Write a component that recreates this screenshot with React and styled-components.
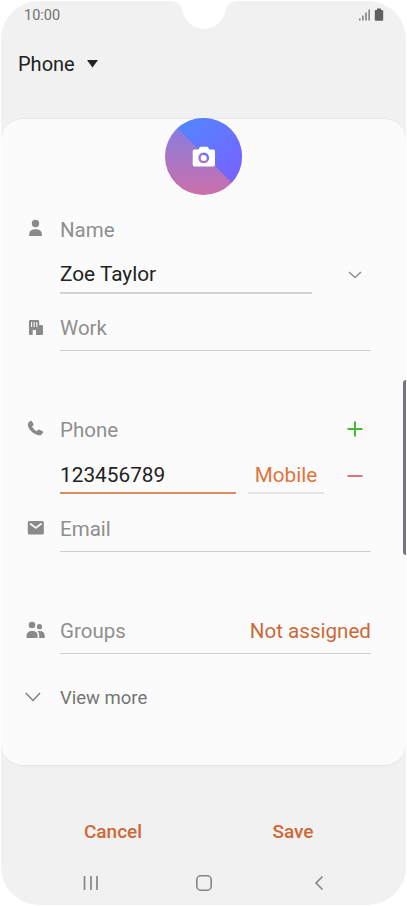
import React, { useState } from 'react';
import styled, { createGlobalStyle } from 'styled-components';

const colors = {
  screen: '#f1f1f1',
  card: '#fbfbfb',
  text: '#222222',
  label: '#8f8f8f',
  icon: '#8a8a8a',
  line: '#cfcfcf',
  accent: '#cc6838'
};

const GlobalStyle = createGlobalStyle`
  * {
    box-sizing: border-box;
  }

  body {
    margin: 0;
    background: #ffffff;
    font-family: Roboto, sans-serif;
    color: ${colors.text};
  }

  button,
  input {
    padding: 0;
    border: 0;
    background: none;
    font: inherit;
    color: inherit;
    outline: none;
  }
`;

const Screen = styled.main`
  position: relative;
  display: flex;
  flex-direction: column;
  width: 405px;
  height: 904px;
  margin: 1px;
  border-radius: 38px;
  background: ${colors.screen};
  overflow: hidden;
`;

const Notch = styled.svg`
  position: absolute;
  top: 0;
  left: 167px;
`;

const EdgeHandle = styled.div`
  position: absolute;
  top: 379px;
  right: 0;
  width: 3px;
  height: 175px;
  border-radius: 3px 0 0 3px;
  background: #777580;
`;

const StatusBar = styled.header`
  display: flex;
  align-items: center;
  justify-content: space-between;
  height: 28px;
  padding: 0 22px 0 23px;
  font-size: 14.5px;
  color: #707070;
`;

const AccountPicker = styled.button`
  display: flex;
  align-items: center;
  gap: 12px;
  height: 70px;
  margin-bottom: 19px;
  padding-left: 17px;
  font-size: 20px;
`;

const Card = styled.section`
  display: flex;
  flex-direction: column;
  height: 648px;
  border-top: 1px solid #e7e7e7;
  border-bottom: 1px solid #e3e3e3;
  border-radius: 22px;
  background: ${colors.card};
`;

const Avatar = styled.button`
  display: flex;
  width: 77px;
  height: 77px;
  margin: -1px auto 13px 164px;
  border-radius: 50%;
  background: linear-gradient(#8a7ddd 15%, #cb6fa9);
  overflow: hidden;
`;

const Row = styled.div`
  display: grid;
  grid-template-columns: 59px 311px;
  height: ${props => props.$height}px;
  margin-top: ${props => props.$gap || 0}px;
`;

const IconCell = styled.div`
  display: flex;
  align-items: center;
  padding-left: 24px;
  padding-top: ${props => props.$top || 0}px;
  padding-bottom: ${props => props.$bottom || 0}px;
`;

const Field = styled.div`
  display: flex;
  align-items: center;
  justify-content: space-between;
  padding-top: ${props => props.$top || 0}px;
  padding-bottom: ${props => props.$bottom || 0}px;
  border-bottom: ${props => (props.$line ? `1px solid ${colors.line}` : 0)};
`;

const Label = styled.span`
  font-size: 20.5px;
  color: ${colors.label};
`;

const Input = styled.input`
  width: ${props => props.$width}px;
  height: ${props => props.$height}px;
  padding-top: 4px;
  border-bottom: 2px solid ${props => (props.$active ? '#dc8b62' : '#d2d2d2')};
  font-size: 20.8px;
`;

const TypeButton = styled.button`
  width: 76px;
  height: 41px;
  padding-top: 4px;
  margin-right: auto;
  margin-left: 12px;
  border-bottom: 2px solid #e4e4e4;
  font-size: 20.7px;
  color: #dc743d;
`;

const IconButton = styled.button`
  display: flex;
  padding-right: 8px;
  padding-top: ${props => props.$top || 0}px;
  padding-bottom: ${props => props.$bottom || 0}px;
`;

const Value = styled.span`
  font-size: 20.6px;
  color: ${colors.accent};
`;

const More = styled.span`
  font-size: 18.5px;
  color: #747474;
`;

const Actions = styled.div`
  display: grid;
  grid-template-columns: 180px 180px;
  height: 44px;
  margin-top: 43px;
  padding-left: 22px;
`;

const Action = styled.button`
  font-size: 19px;
  font-weight: 500;
  color: ${colors.accent};
`;

const NavBar = styled.nav`
  display: grid;
  grid-template-columns: 113px 118px 10px;
  align-items: center;
  height: 38px;
  margin-top: 11px;
  padding-left: 82px;
`;

const Svg = ({ w, h, children, ...rest }) => (
  <svg width={w} height={h} viewBox={`0 0 ${w} ${h}`} fill={colors.icon} {...rest}>
    {children}
  </svg>
);

const PersonIcon = () => (
  <Svg w={22} h={18}>
    <circle cx="10.5" cy="4.5" r="3.7" />
    <path d="M4.2 17v-1.5c0-3.5 2.4-5.2 6.3-5.2s6.4 1.7 6.4 5.2V17z" />
  </Svg>
);

const WorkIcon = () => (
  <Svg w={22} h={18}>
    <path
      fillRule="evenodd"
      d="M5.2 1h7.8q1.2 0 1.2 1.2V6h2.5q1.3 0 1.3 1.3v7.5q0 1.2-1.2 1.2H11v-5H7.7v5H5.2Q4 16 4 14.8V2.2Q4 1 5.2 1zM6 3v5h1.1V3zm2.6 0v5h1.1V3zm2.6 0v5h1.1V3z"
    />
  </Svg>
);

const PhoneIcon = () => (
  <Svg w={22} h={18}>
    <path d="M3.5 2.4 5.1 1c.7-.5 1.4-.4 1.8.3l1.5 2.6c.4.7.2 1.2-.4 1.7l-.9.8c1 2.2 2.6 3.8 4.8 4.8l.9-1.2c.5-.6 1.1-.7 1.8-.3l2.9 1.5c.7.4.8 1.1.3 1.8-1 1.8-2.4 2.7-4.6 2.2C7.4 13.8 3.2 9.3 2.8 4.6c0-.9.2-1.7.7-2.2z" />
  </Svg>
);

const MailIcon = () => (
  <Svg w={22} h={18}>
    <rect x="2.8" y="2" width="16" height="13.5" rx="1.5" />
    <path d="m5 4.5 5.8 4.5 5.8-4.5" fill="none" stroke={colors.card} strokeWidth="1.7" />
  </Svg>
);

const GroupIcon = () => (
  <Svg w={22} h={18}>
    <circle cx="7" cy="4" r="3.3" />
    <circle cx="14.5" cy="5.7" r="2.6" />
    <path d="M1.6 17v-2c0-3.5 2-5 5.7-5s5.3 1.5 5.3 5v2z" />
    <path d="M12.6 10.2c4.5-.7 7.1.9 7.1 4.5V17h-5.5v-2c0-2-.5-3.6-1.6-4.8z" />
  </Svg>
);

const Contact = () => {
  const [name, setName] = useState('Zoe Taylor');
  const [number, setNumber] = useState('123456789');

  return (
    <Card>
      <Avatar aria-label="Change photo">
        <Svg w={77} h={77}>
          <defs>
            <linearGradient id="sky" x1="0.2" y1="0" x2="0.8" y2="0.8">
              <stop offset="0" stopColor="#5088ff" />
              <stop offset="1" stopColor="#7664ff" />
            </linearGradient>
          </defs>
          <path d="M1-1 78 76V-1z" fill="url(#sky)" />
          <path
            fill="#fff"
            fillRule="evenodd"
            d="M29.5 31.5h4l1-2q.4-.7 1.2-.7h6.3q.8 0 1.2.7l1 2h4q1.8 0 1.8 1.7v13.6q0 1.7-1.8 1.7H29.5q-1.8 0-1.8-1.7V33.2q0-1.7 1.8-1.7zM38.7 34.5a5.4 5.4 0 1 0 0 10.8 5.4 5.4 0 0 0 0-10.8z"
          />
          <circle cx="38.7" cy="39.9" r="3" fill="#fff" />
        </Svg>
      </Avatar>

      <Row $height={44}>
        <IconCell $bottom={4}><PersonIcon /></IconCell>
        <Field><Label>Name</Label></Field>
      </Row>
      <Row $height={42}>
        <span />
        <Field>
          <Input $width={252} $height={42} value={name} onChange={e => setName(e.target.value)} />
          <IconButton aria-label="Expand name" $top={4}>
            <Svg w={16} h={12}>
              <path d="m2 3 6 5.5L14 3" fill="none" stroke="#8f8f8f" strokeWidth="1.5" />
            </Svg>
          </IconButton>
        </Field>
      </Row>
      <Row $height={57}>
        <IconCell $top={10}><WorkIcon /></IconCell>
        <Field $top={12} $line><Label>Work</Label></Field>
      </Row>

      <Row $height={44} $gap={58}>
        <IconCell $bottom={4}><PhoneIcon /></IconCell>
        <Field $bottom={2}>
          <Label>Phone</Label>
          <IconButton aria-label="Add number" $bottom={2}>
            <Svg w={16} h={16}>
              <path d="M.5 8h15M8 .5v15" stroke="#45b935" strokeWidth="2" />
            </Svg>
          </IconButton>
        </Field>
      </Row>
      <Row $height={41}>
        <span />
        <Field>
          <Input $active $width={176} $height={41} value={number} onChange={e => setNumber(e.target.value)} />
          <TypeButton>Mobile</TypeButton>
          <IconButton aria-label="Remove number" $top={4}>
            <Svg w={16} h={16}>
              <path d="M.5 8h15" stroke="#dc6464" strokeWidth="1.8" />
            </Svg>
          </IconButton>
        </Field>
      </Row>
      <Row $height={58}>
        <IconCell $top={10}><MailIcon /></IconCell>
        <Field $top={12} $line><Label>Email</Label></Field>
      </Row>

      <Row $height={44} $gap={58}>
        <IconCell $bottom={4}><GroupIcon /></IconCell>
        <Field $bottom={2} $line>
          <Label>Groups</Label>
          <Value>Not assigned</Value>
        </Field>
      </Row>
      <Row $height={44} $gap={22}>
        <IconCell $bottom={2}>
          <Svg w={16} h={16}>
            <path d="M.8 4 8 11.5 15 4" fill="none" stroke="#808080" strokeWidth="1.5" />
          </Svg>
        </IconCell>
        <Field><More>View more</More></Field>
      </Row>
    </Card>
  );
};

const App = () => (
  <>
    <GlobalStyle />
    <Screen>
      <StatusBar>
        <span>10:00</span>
        <Svg w={26} h={14} style={{ fill: '#5f5f5f' }}>
          <path d="M1.2 10.5h1.2v2H1.2zM4.3 7.5h1.2v5H4.3zM7.4 4.5h1.2v8H7.4zM10.5 1.5h1.2v11h-1.2z" />
          <path d="M19 .5h4V2h1.2q1 0 1 1v8.8q0 1-1 1h-6.4q-1 0-1-1V3q0-1 1-1H19z" />
        </Svg>
      </StatusBar>
      <AccountPicker>
        Phone
        <Svg w={11} h={8} style={{ fill: '#222' }}>
          <path d="M0 0h11L5.5 7.5z" />
        </Svg>
      </AccountPicker>
      <Contact />
      <Actions>
        <Action>Cancel</Action>
        <Action>Save</Action>
      </Actions>
      <NavBar>
        <Svg w={16} h={16}>
          <path d="M1.5 1v14M8 1v14M14 1v14" stroke="#858585" strokeWidth="1.7" />
        </Svg>
        <Svg w={16} h={16}>
          <rect x=".8" y=".8" width="14.4" height="14.4" rx="4" fill="none" stroke="#858585" strokeWidth="1.6" />
        </Svg>
        <Svg w={10} h={16}>
          <path d="M8.5 1.5 2 8l6.5 6.5" fill="none" stroke="#858585" strokeWidth="1.6" />
        </Svg>
      </NavBar>
      <Notch width="72" height="30" viewBox="0 0 72 30">
        <path d="M0 0c9 0 13 3 14 9 3 12 12 19 22 19s19-7 22-19C59 3 63 0 72 0z" fill="#fff" />
      </Notch>
      <EdgeHandle />
    </Screen>
  </>
);

export default App;
